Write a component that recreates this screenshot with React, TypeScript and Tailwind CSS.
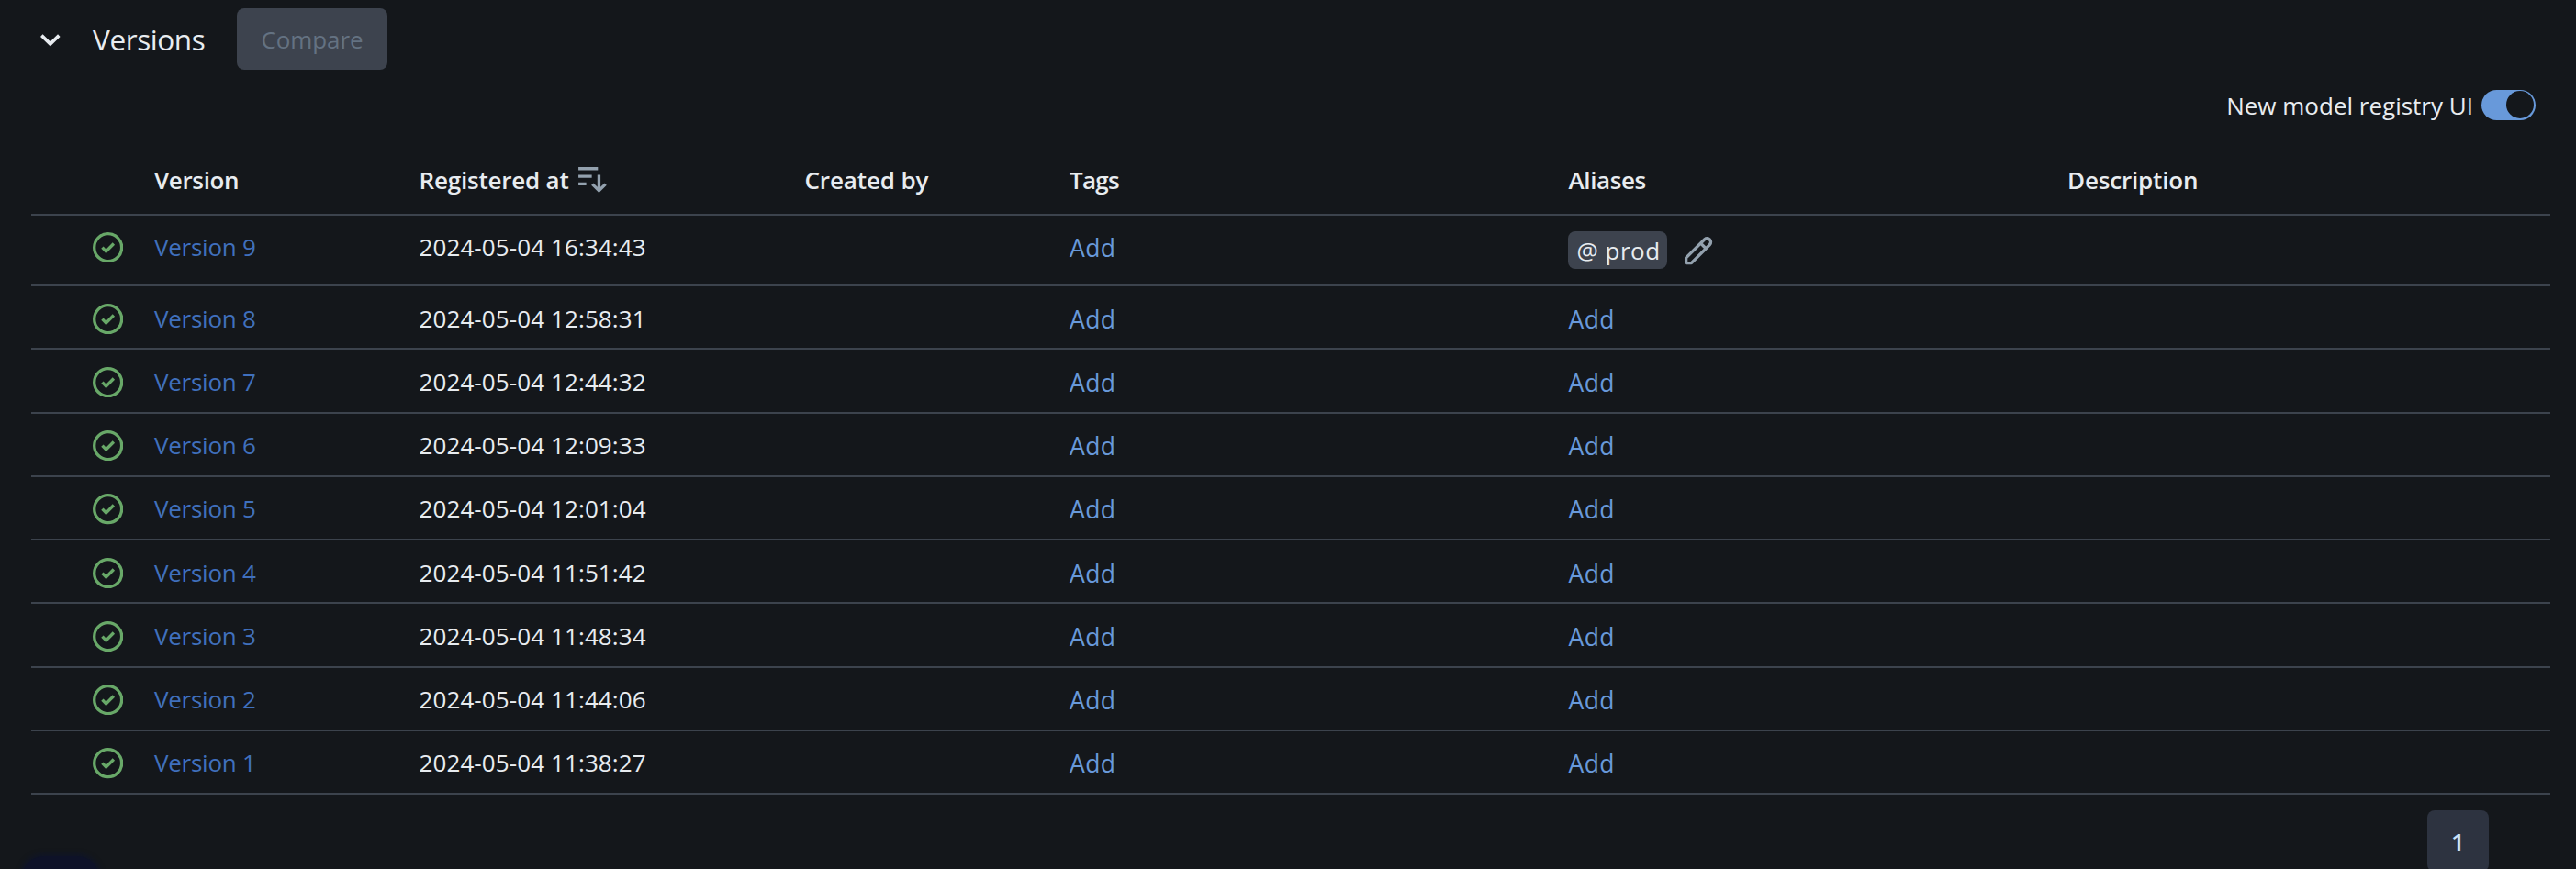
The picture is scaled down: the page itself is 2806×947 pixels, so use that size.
type Row = { version: string; registered: string; alias?: string };

const rows: Row[] = [
  { version: "Version 9", registered: "2024-05-04 16:34:43", alias: "@ prod" },
  { version: "Version 8", registered: "2024-05-04 12:58:31" },
  { version: "Version 7", registered: "2024-05-04 12:44:32" },
  { version: "Version 6", registered: "2024-05-04 12:09:33" },
  { version: "Version 5", registered: "2024-05-04 12:01:04" },
  { version: "Version 4", registered: "2024-05-04 11:51:42" },
  { version: "Version 3", registered: "2024-05-04 11:48:34" },
  { version: "Version 2", registered: "2024-05-04 11:44:06" },
  { version: "Version 1", registered: "2024-05-04 11:38:27" },
];

const grid =
  "grid grid-cols-[134px_288.5px_420px_288.5px_543.5px_543.5px_1fr] border-b-2 border-[#3c434d]";

function ChevronIcon() {
  return (
    <svg className="h-[14px] w-[22px]" viewBox="0 0 22 14" fill="none" stroke="currentColor" strokeWidth="3.6">
      <path d="M1.3 1.6 10.8 10.9 20.3 1.6" />
    </svg>
  );
}

function CheckCircleIcon() {
  return (
    <svg className="size-[33.3px]" viewBox="0 0 16 16" fill="none" stroke="currentColor" strokeWidth="1.6">
      <circle cx="8" cy="8" r="7.2" />
      <path d="M5 8 7 10 11 6" />
    </svg>
  );
}

function SortDescendingIcon() {
  return (
    <svg className="size-[33.3px]" viewBox="0 0 16 16" fill="none" stroke="currentColor" strokeWidth="1.6">
      <path d="M1 2.75H11.2M1 6.75H8M1 10.75H5.1M11.75 6V14.2M8.3 10.9 11.75 14.3 15.2 10.9" />
    </svg>
  );
}

function PencilIcon() {
  return (
    <svg className="size-[33.3px]" viewBox="0 0 16 16" fill="none" stroke="currentColor" strokeWidth="1.6" strokeLinejoin="round">
      <path d="M1.75 14.25V11.5L11.45 1.8A1.95 1.95 0 0 1 14.2 4.55L4.5 14.25ZM9.4 3.9 12.1 6.6" />
    </svg>
  );
}

function AddLink() {
  return <a className="pt-px text-[26.5px] tracking-[0.4px] text-[#6899da]">Add</a>;
}

export default function App() {
  return (
    <div className="relative h-[947px] w-full overflow-hidden bg-[#14171b] font-['Open_Sans',sans-serif] text-[26px] text-[#e8ecf0]">
      <div className="flex h-[84px] items-center pl-[44px]">
        <div className="pt-[3px]">
          <ChevronIcon />
        </div>
        <h2 className="ml-[35px] w-[157px] pt-[1px] text-[31.5px] leading-[50px] tracking-[-0.4px]">Versions</h2>
        <button className="h-[67px] w-[164px] rounded-lg bg-[#3d434e] pt-[3px] tracking-[-0.1px] text-[#647282]" disabled>
          Compare
        </button>
      </div>

      <div className="flex h-[62px] items-center justify-end pb-[2px] pr-[44px]">
        <span className="mr-[9px] pt-[2px]">New model registry UI</span>
        <div className="flex h-[33px] w-[59px] items-center justify-end rounded-full bg-[#6899da] pr-[2px]">
          <div className="size-[30px] rounded-full bg-[#14171b]" />
        </div>
      </div>

      <div className="ml-[34px] w-[2744px]">
        <div className={`${grid} h-[89px] pt-[17px] font-semibold leading-[66px]`}>
          <span />
          <span className="tracking-[-0.35px]">Version</span>
          <span className="flex">
            <span className="tracking-[-0.2px]">Registered at</span>
            <span className="ml-[8px] mt-[15px] text-[#93a1ae]">
              <SortDescendingIcon />
            </span>
          </span>
          <span className="tracking-[-0.13px]">Created by</span>
          <span className="tracking-[-0.7px]">Tags</span>
          <span className="tracking-[-0.4px]">Aliases</span>
          <span className="tracking-[-0.17px]">Description</span>
        </div>

        {rows.map((row) => (
          <div
            key={row.version}
            className={`${grid} items-start leading-[68px] ${row.alias ? "h-[77.1px]" : "h-[69.25px] pt-[0.5px]"}`}
          >
            <span className="pl-[67px] pt-[18px] text-[#68a868]">
              <CheckCircleIcon />
            </span>
            <a className="tracking-[-0.25px] text-[#4070bd]">{row.version}</a>
            <span className="tracking-[0.1px]">{row.registered}</span>
            <span />
            <AddLink />
            {row.alias ? (
              <span className="-ml-px flex pt-[17px]">
                <span className="h-[41px] w-[108px] rounded-lg bg-[#3d434e] pl-[10px] leading-[42px] tracking-[0.5px]">
                  {row.alias}
                </span>
                <span className="ml-[17px] mt-[5px] text-[#93a1ae]">
                  <PencilIcon />
                </span>
              </span>
            ) : (
              <AddLink />
            )}
            <span />
          </div>
        ))}
      </div>

      <div className="mt-[17px] flex justify-end pr-[95px]">
        <div className="h-[67px] w-[67px] rounded-lg bg-[#2d3340] pt-px text-center font-semibold leading-[67px] text-[#c6e0fb]">
          1
        </div>
      </div>

      <div className="absolute -bottom-[40px] left-[24px] h-[54px] w-[84px] rounded-[24px] bg-[#0e1228] shadow-[0_0_5px_3px_#101526]" />
    </div>
  );
}
